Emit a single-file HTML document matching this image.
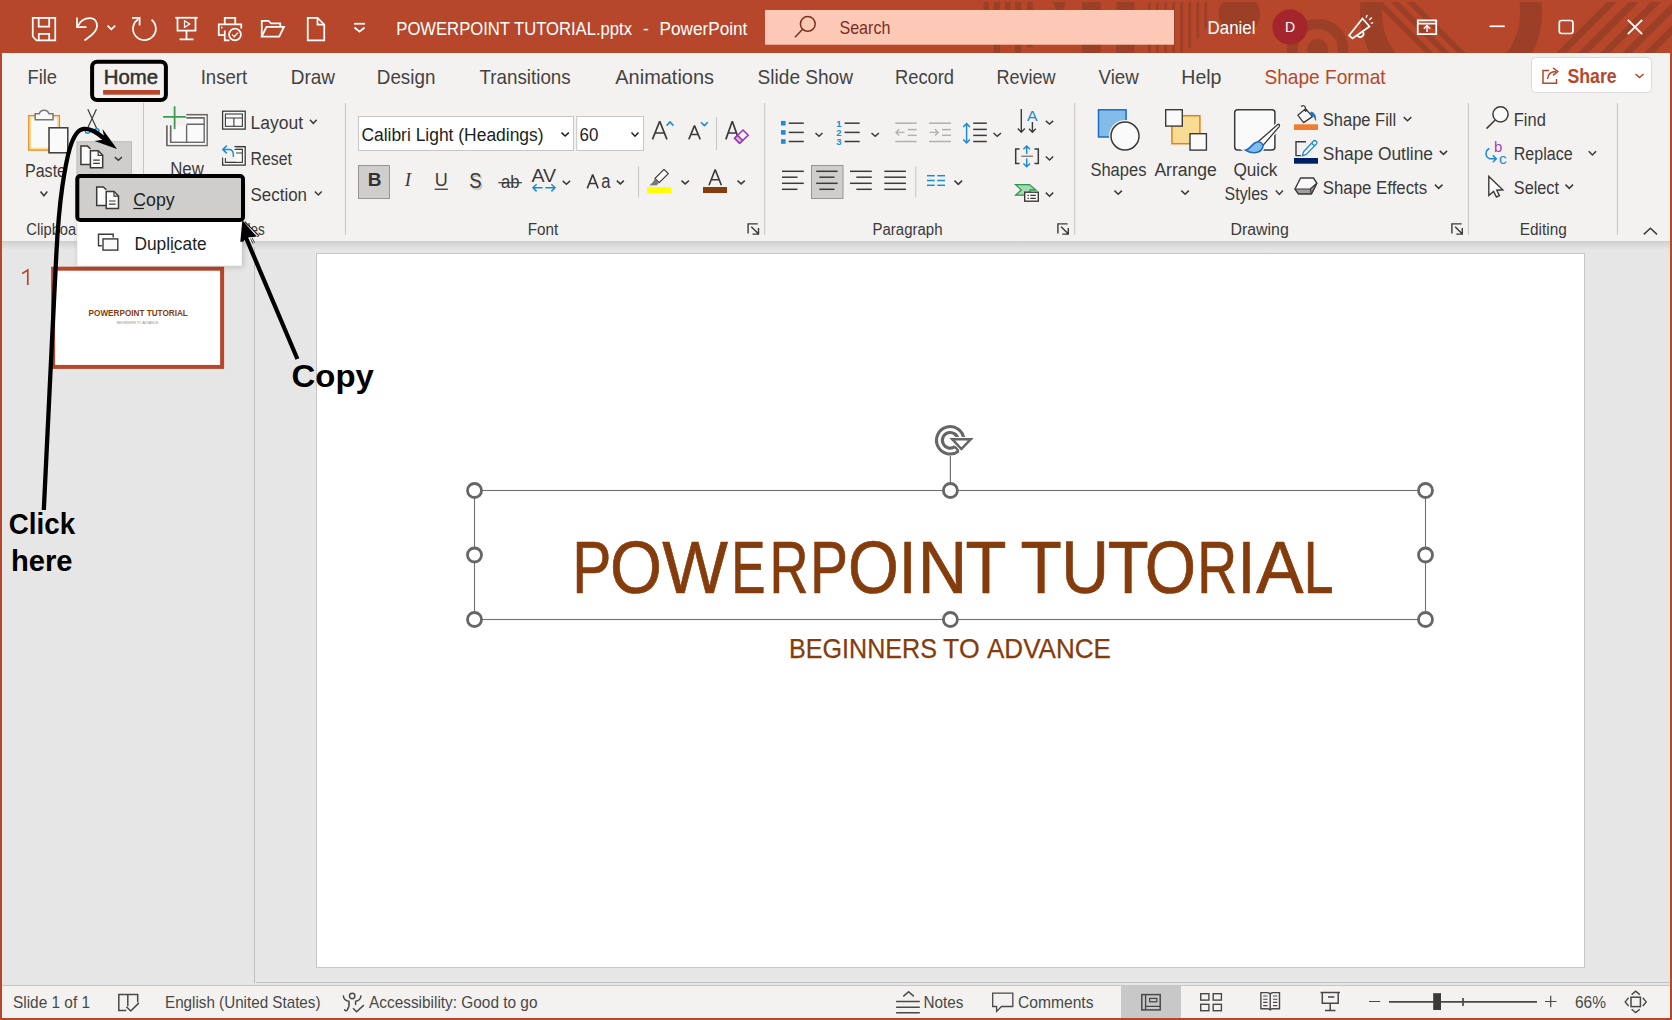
<!DOCTYPE html>
<html><head><meta charset="utf-8"><title>PowerPoint</title>
<style>
html,body{margin:0;padding:0;background:#e6e6e6;overflow:hidden}
svg{display:block;font-family:"Liberation Sans",sans-serif}
text{white-space:pre}
</style></head><body>
<svg width="1672" height="1020" viewBox="0 0 1672 1020">
<defs>
<linearGradient id="shd" x1="0" y1="0" x2="0" y2="1"><stop offset="0" stop-color="#cfcfcf"/><stop offset="1" stop-color="#e6e6e6"/></linearGradient>
<filter id="mshadow" x="-10%" y="-10%" width="125%" height="130%"><feGaussianBlur stdDeviation="3"/></filter>
<clipPath id="tbclip"><rect x="0" y="2" width="1672" height="51"/></clipPath>
</defs>
<rect x="0" y="0" width="1672" height="1020" fill="#e6e6e6" stroke="none" stroke-width="1" rx="0" />
<rect x="0" y="0" width="1672" height="53" fill="#b7472a" stroke="none" stroke-width="1" rx="0" />
<rect x="0" y="53" width="1672" height="188" fill="#f3f2f1" stroke="none" stroke-width="1" rx="0" />
<rect x="0" y="241" width="1672" height="9" fill="url(#shd)" stroke="none" stroke-width="1" rx="0" />
<rect x="0" y="985" width="1672" height="1" fill="#c6c6c6" stroke="none" stroke-width="1" rx="0" />
<rect x="0" y="986" width="1672" height="32" fill="#f3f2f1" stroke="none" stroke-width="1" rx="0" />
<g clip-path="url(#tbclip)" fill="#9c3f27" stroke="none">
<rect x="983.3" y="2" width="5.5" height="28" fill="#9c3f27" stroke="none" stroke-width="1" rx="0" />
<rect x="993.9" y="2" width="6.2000000000000455" height="51" fill="#9c3f27" stroke="none" stroke-width="1" rx="0" />
<rect x="1005.1" y="2" width="5.399999999999977" height="28" fill="#9c3f27" stroke="none" stroke-width="1" rx="0" />
<rect x="1015.2" y="2" width="5.7999999999999545" height="51" fill="#9c3f27" stroke="none" stroke-width="1" rx="0" />
<rect x="1027.2" y="2" width="5.599999999999909" height="45.4" fill="#9c3f27" stroke="none" stroke-width="1" rx="0" />
<path d="M1052.8,2 L1066,2 L1062,12 L1057,12 Z"/>
<rect x="1082" y="2" width="18.7" height="51" fill="#9c3f27" stroke="none" stroke-width="1" rx="0" />
<rect x="1116.3" y="2" width="18.2" height="51" fill="#9c3f27" stroke="none" stroke-width="1" rx="0" />
<path d="M1148.2,2 h2.6 V55.4 l-2.6,2.6 Z"/>
<path d="M1156.2,2 h2.6 V55.4 l-2.6,2.6 Z"/>
<path d="M1164.3,2 h2.6 V55.4 l-2.6,2.6 Z"/>
<path d="M1172.4,2 h2.6 V55.4 l-2.6,2.6 Z"/>
<path d="M1180.4,2 h2.6 V55.4 l-2.6,2.6 Z"/>
<path d="M1188.5,2 h2.6 V46.4 l-2.6,2.6 Z"/>
<path d="M1196.5,2 h2.6 V37.1 l-2.6,2.6 Z"/>
<path d="M1204.5,2 h2.6 V26.9 l-2.6,2.6 Z"/>
<circle cx="1239.3" cy="14" r="20.7"/>
<circle cx="1317.6" cy="49.3" r="10.5"/>
<circle cx="1317.6" cy="49.3" r="25.4" fill="none" stroke="#9c3f27" stroke-width="10.4"/>
<circle cx="1451" cy="12" r="80" fill="none" stroke="#9c3f27" stroke-width="22"/>
<path d="M1374.5,2 l8,0 l52,52 l-8,0 Z"/>
<path d="M1390.6,2 l8,0 l52,52 l-8,0 Z"/>
<path d="M1406.7,2 l8,0 l52,52 l-8,0 Z"/>
<path d="M1556,53 l10,0 l52,-52 l-10,0 Z"/>
<path d="M1578,53 l10,0 l52,-52 l-10,0 Z"/>
<path d="M1600,53 l10,0 l52,-52 l-10,0 Z"/>
<path d="M1622,53 l10,0 l52,-52 l-10,0 Z"/>
<path d="M1644,53 l10,0 l52,-52 l-10,0 Z"/>
</g>
<path d="M32.75,17.75 H55.25 V40.25 H36.5 L32.75,36.5 Z" fill="none" stroke="#ffffff" stroke-width="1.75" />
<path d="M38.7,17.75 V26.5 H49.2 V17.75" fill="none" stroke="#ffffff" stroke-width="1.75" />
<path d="M38.8,40.25 V33.8 H49.2 V40.25" fill="none" stroke="#ffffff" stroke-width="1.75" />
<path d="M37.75,40.25 V29.75 H50.5 V40.25" fill="none" stroke="#ffffff" stroke-width="0" />
<path d="M77,17.5 V27 H86.5" fill="none" stroke="#ffffff" stroke-width="1.75" />
<path d="M77.5,26.5 C80,21 85,18 90,18 C95,18 97,22 97,26 C97,30 94,33 91,35.5 L84.5,40.5" fill="none" stroke="#ffffff" stroke-width="1.75" />
<path d="M107.5,25.6 L111.35,29.4 L115.2,25.6" fill="none" stroke="#ffffff" stroke-width="1.7"/>
<path d="M132,17.9 H139.6 V25.5" fill="none" stroke="#ffffff" stroke-width="1.75" />
<path d="M151.5,19.8 A11.4,11.4 0 1 1 138.2,19.2" fill="none" stroke="#ffffff" stroke-width="1.75" />
<path d="M175.3,17.75 H197.7" fill="none" stroke="#ffffff" stroke-width="1.75" />
<path d="M177.5,17.75 V30.5 H195.5 V17.75" fill="none" stroke="#ffffff" stroke-width="1.75" />
<path d="M186.5,30.5 V39 M179.5,39.25 H193.5" fill="none" stroke="#ffffff" stroke-width="1.75" />
<path d="M184.5,20.8 L189.8,24 L184.5,27.3 Z" fill="none" stroke="#ffffff" stroke-width="1.2" />
<path d="M224.75,24 V17.75 H235.25 V24" fill="none" stroke="#ffffff" stroke-width="1.75" />
<path d="M224.5,35 H218.75 V24.25 H241.25 V28.5" fill="none" stroke="#ffffff" stroke-width="1.75" />
<path d="M224.75,30.5 V40.25 H229.5" fill="none" stroke="#ffffff" stroke-width="1.75" />
<path d="M221,27.5 h1.5" fill="none" stroke="#ffffff" stroke-width="1.75" />
<circle cx="235" cy="34.5" r="5.9" fill="none" stroke="#ffffff" stroke-width="1.75" />
<path d="M232.2,34.6 L234.3,36.7 L238,32.6" fill="none" stroke="#ffffff" stroke-width="1.3" />
<path d="M261.75,36.3 V20.75 H268.5 L271,23.25 H280.25 V26.5" fill="none" stroke="#ffffff" stroke-width="1.75" />
<path d="M261.75,36.5 L266.5,26.75 H284 L279.25,36.5 Z" fill="none" stroke="#ffffff" stroke-width="1.75" />
<path d="M307.75,17.75 H317.5 L324.25,24.5 V40.25 H307.75 Z" fill="none" stroke="#ffffff" stroke-width="1.75" />
<path d="M317.5,17.75 V24.5 H324.25" fill="none" stroke="#ffffff" stroke-width="1.75" />
<path d="M354,23.75 H365" fill="none" stroke="#ffffff" stroke-width="1.75" />
<path d="M354.5,27.5 L359.5,31.7 L364.5,27.5" fill="none" stroke="#ffffff" stroke-width="1.75" />
<text x="396.3" y="35" font-size="18.2" fill="#ffffff" textLength="235.7" lengthAdjust="spacingAndGlyphs" >POWERPOINT TUTORIAL.pptx</text>
<text x="643" y="35" font-size="18.2" fill="#ffffff" textLength="5.8" lengthAdjust="spacingAndGlyphs" >-</text>
<text x="659.6" y="35" font-size="18.2" fill="#ffffff" textLength="87.7" lengthAdjust="spacingAndGlyphs" >PowerPoint</text>
<rect x="765" y="10" width="409" height="34.7" fill="#fcc9b7" stroke="none" stroke-width="1" rx="0" />
<circle cx="807.8" cy="23.9" r="7.4" fill="none" stroke="#7b2f1f" stroke-width="1.5" />
<line x1="802.6" y1="29.3" x2="795" y2="37.2" stroke="#7b2f1f" stroke-width="1.5" />
<text x="839.4" y="33.8" font-size="18.2" fill="#7b2f1f" textLength="51" lengthAdjust="spacingAndGlyphs" >Search</text>
<text x="1207.6" y="33.8" font-size="18.2" fill="#ffffff" textLength="47.8" lengthAdjust="spacingAndGlyphs" >Daniel</text>
<circle cx="1290" cy="27" r="17.7" fill="#a4262c" stroke="none" stroke-width="0" />
<text x="1290" y="32.1" font-size="14" fill="#ffffff" text-anchor="middle" >D</text>
<path d="M1349,35.5 L1362.5,18.5 L1369.5,26.5 L1352.5,38.5 Z" fill="none" stroke="#ffffff" stroke-width="1.75" />
<path d="M1357.5,35.5 a3.2,3.2 0 0 0 5.5,-3.5" fill="none" stroke="#ffffff" stroke-width="1.75" />
<path d="M1366,17.8 l1.2,-2.8 M1369.2,20 l2.6,-2.4 M1370.8,23.3 l2.4,-0.6" fill="none" stroke="#ffffff" stroke-width="1.3" />
<path d="M1417.75,20.25 H1436.25 V34 H1417.75 Z M1417.75,23.5 H1436.25" fill="none" stroke="#ffffff" stroke-width="1.75" />
<path d="M1427,32 V26 M1423.8,28.8 L1427,25.6 L1430.2,28.8" fill="none" stroke="#ffffff" stroke-width="1.4" />
<line x1="1489.6" y1="26.3" x2="1504.7" y2="26.3" stroke="#ffffff" stroke-width="1.7" />
<rect x="1559.3" y="20.5" width="13.6" height="13" fill="none" stroke="#ffffff" stroke-width="1.7" rx="2.2" />
<path d="M1627.8,19.8 L1642.2,34.2 M1642.2,19.8 L1627.8,34.2" fill="none" stroke="#ffffff" stroke-width="1.75" />
<text x="27.5" y="83.6" font-size="19.8" fill="#454341" textLength="29.5" lengthAdjust="spacingAndGlyphs" >File</text>
<text x="200.7" y="83.6" font-size="19.8" fill="#454341" textLength="46.5" lengthAdjust="spacingAndGlyphs" >Insert</text>
<text x="290.7" y="83.6" font-size="19.8" fill="#454341" textLength="44.3" lengthAdjust="spacingAndGlyphs" >Draw</text>
<text x="376.8" y="83.6" font-size="19.8" fill="#454341" textLength="58.6" lengthAdjust="spacingAndGlyphs" >Design</text>
<text x="479.6" y="83.6" font-size="19.8" fill="#454341" textLength="91.1" lengthAdjust="spacingAndGlyphs" >Transitions</text>
<text x="615.3" y="83.6" font-size="19.8" fill="#454341" textLength="98.7" lengthAdjust="spacingAndGlyphs" >Animations</text>
<text x="757.6" y="83.6" font-size="19.8" fill="#454341" textLength="95.4" lengthAdjust="spacingAndGlyphs" >Slide Show</text>
<text x="895" y="83.6" font-size="19.8" fill="#454341" textLength="59" lengthAdjust="spacingAndGlyphs" >Record</text>
<text x="996.4" y="83.6" font-size="19.8" fill="#454341" textLength="59.2" lengthAdjust="spacingAndGlyphs" >Review</text>
<text x="1098.5" y="83.6" font-size="19.8" fill="#454341" textLength="40.3" lengthAdjust="spacingAndGlyphs" >View</text>
<text x="1181.3" y="83.6" font-size="19.8" fill="#454341" textLength="40.2" lengthAdjust="spacingAndGlyphs" >Help</text>
<text x="103.8" y="83.6" font-size="19.8" fill="#323130" textLength="54.4" lengthAdjust="spacingAndGlyphs" stroke="#323130" stroke-width="0.5">Home</text>
<rect x="103.1" y="90" width="56.9" height="4.7" fill="#b7472a" stroke="none" stroke-width="1" rx="0" />
<text x="1264.4" y="83.6" font-size="19.8" fill="#b7472a" textLength="121.2" lengthAdjust="spacingAndGlyphs" >Shape Format</text>
<rect x="1531.5" y="57.5" width="120" height="35" fill="#ffffff" stroke="#dcdad8" stroke-width="1" rx="4" />
<path d="M1549,70.5 H1543 V83.25 H1556.5 V79" fill="none" stroke="#b7472a" stroke-width="1.5" />
<path d="M1547.5,79 C1548,73.5 1551.5,71.5 1556,71.5 M1553,67.8 L1557.8,71.5 L1553,75.4" fill="none" stroke="#b7472a" stroke-width="1.5" />
<text x="1567.5" y="83.3" font-size="19.8" fill="#b7472a" textLength="49.2" lengthAdjust="spacingAndGlyphs" font-weight="bold" >Share</text>
<path d="M1635.5,74.0 L1639.5,77.60000000000001 L1643.5,74.0" fill="none" stroke="#b7472a" stroke-width="1.5"/>
<rect x="143.0" y="103" width="1" height="132" fill="#c8c6c4" stroke="none" stroke-width="1" rx="0" />
<rect x="345.0" y="103" width="1" height="132" fill="#c8c6c4" stroke="none" stroke-width="1" rx="0" />
<rect x="764.2" y="103" width="1" height="132" fill="#c8c6c4" stroke="none" stroke-width="1" rx="0" />
<rect x="1074.2" y="103" width="1" height="132" fill="#c8c6c4" stroke="none" stroke-width="1" rx="0" />
<rect x="1467.9" y="103" width="1" height="132" fill="#c8c6c4" stroke="none" stroke-width="1" rx="0" />
<rect x="1616.9" y="103" width="1" height="132" fill="#c8c6c4" stroke="none" stroke-width="1" rx="0" />
<rect x="28.9" y="115.7" width="30.4" height="34.3" fill="#fafafa" stroke="#e8861c" stroke-width="1.5" rx="0" />
<rect x="30.4" y="117.2" width="27.4" height="31.3" fill="none" stroke="#fbdc93" stroke-width="1.5" rx="0" />
<path d="M35.2,119.7 V113.7 H39.2 A5.2,5.2 0 0 1 49,113.7 H53 V119.7 Z" fill="#fafafa" stroke="#797775" stroke-width="1.5" />
<rect x="49" y="127.8" width="18.8" height="25" fill="#fafafa" stroke="#3b3a39" stroke-width="1.5" rx="0" />
<text x="25" y="176.8" font-size="18" fill="#3b3a39" textLength="41" lengthAdjust="spacingAndGlyphs" >Paste</text>
<path d="M40.5,191.5 L43.9,195.8 L47.3,191.5" fill="none" stroke="#3b3a39" stroke-width="1.5"/>
<path d="M87.8,109.3 L96.6,128.3 M96.4,109.3 L87.6,128.3" fill="none" stroke="#3b3a39" stroke-width="1.2" />
<circle cx="87.6" cy="131" r="2.3" fill="none" stroke="#1e8ad2" stroke-width="1.4" />
<circle cx="96.7" cy="131" r="2.3" fill="none" stroke="#1e8ad2" stroke-width="1.4" />
<rect x="76.9" y="141.7" width="54.6" height="34" fill="#d0cecc" stroke="#bdbbb9" stroke-width="1" rx="0" />
<path d="M90.2,164.6 H80.9 V146.1 H87.5 L90.5,149" fill="#fafafa" stroke="#3b3a39" stroke-width="1.5" />
<path d="M90.4,150.7 H98.3 L102.7,155.2 V167.7 H90.4 Z" fill="#fafafa" stroke="#3b3a39" stroke-width="1.5" />
<path d="M98.2,151 V155.4 H102.5" fill="none" stroke="#3b3a39" stroke-width="1.2" />
<path d="M93.2,160.2 H99.8 M93.2,163.4 H99.8" fill="none" stroke="#3b3a39" stroke-width="1.2" />
<path d="M114.8,157.1 L118.35,160.3 L121.9,157.1" fill="none" stroke="#3b3a39" stroke-width="1.5"/>
<text x="26.3" y="234.8" font-size="15.6" fill="#3b3a39" textLength="63" lengthAdjust="spacingAndGlyphs" >Clipboard</text>
<rect x="166.8" y="114.6" width="40.4" height="31" fill="#fafafa" stroke="#6b6967" stroke-width="1.4" rx="0" />
<rect x="170.6" y="117.8" width="33.6" height="24.5" fill="none" stroke="#6b6967" stroke-width="1.4" rx="0" />
<path d="M170.6,124.2 H204.2 M186.6,124.2 V142.3" fill="none" stroke="#6b6967" stroke-width="1.4" />
<rect x="162" y="105" width="24.5" height="20.5" fill="#f3f2f1" stroke="none" stroke-width="1" rx="0" />
<path d="M166.8,125.5 V145.6 M170.6,125.5 V142.3" fill="none" stroke="#6b6967" stroke-width="1.4" />
<path d="M174.6,106.2 V129 M163.1,116.9 H185.9" fill="none" stroke="#3d9c54" stroke-width="1.8" />
<path d="M186.5,114.6 H207.2 M186.5,117.8 H204.2" fill="none" stroke="#6b6967" stroke-width="1.4" />
<text x="170.2" y="175.2" font-size="18" fill="#3b3a39" textLength="33.7" lengthAdjust="spacingAndGlyphs" >New</text>
<rect x="222.6" y="111.2" width="22.6" height="17.9" fill="#fafafa" stroke="#3b3a39" stroke-width="1.3" rx="0" />
<rect x="225.4" y="114" width="17" height="12.3" fill="none" stroke="#3b3a39" stroke-width="1.1" rx="0" />
<path d="M225.4,118 H242.4 M233.9,118 V126.3" fill="none" stroke="#3b3a39" stroke-width="1.1" />
<text x="250.6" y="128.6" font-size="18" fill="#3b3a39" textLength="52.5" lengthAdjust="spacingAndGlyphs" >Layout</text>
<path d="M309.9,119.8 L313.29999999999995,123.30000000000001 L316.7,119.8" fill="none" stroke="#3b3a39" stroke-width="1.5"/>
<rect x="222.6" y="146.6" width="22.6" height="18.5" fill="#fafafa" stroke="#3b3a39" stroke-width="1.3" rx="0" />
<rect x="225.4" y="149.4" width="17" height="13" fill="none" stroke="#3b3a39" stroke-width="1.1" rx="0" />
<rect x="220" y="143" width="14.5" height="19.5" fill="#f3f2f1" stroke="none" stroke-width="1" rx="0" />
<path d="M222.6,157.5 V165.1 M225.4,158 V162.4 H236 M236,146.6 H245 M236,149.4 H242.4 M236,153 H242.4" fill="none" stroke="#3b3a39" stroke-width="1.1" />
<path d="M223.2,149.5 H229.5 C232.5,149.5 233.8,152.5 233.3,156.8 M226.8,145.6 L222.8,149.5 L226.8,153.4" fill="none" stroke="#1e8ad2" stroke-width="1.5" />
<text x="250.6" y="164.5" font-size="18" fill="#3b3a39" textLength="41.2" lengthAdjust="spacingAndGlyphs" >Reset</text>
<text x="250.6" y="200.9" font-size="18" fill="#3b3a39" textLength="56.4" lengthAdjust="spacingAndGlyphs" >Section</text>
<path d="M314.9,191.5 L318.29999999999995,195.0 L321.7,191.5" fill="none" stroke="#3b3a39" stroke-width="1.5"/>
<text x="228" y="234.8" font-size="15.6" fill="#3b3a39" textLength="36.7" lengthAdjust="spacingAndGlyphs" >Slides</text>
<rect x="358.5" y="116.5" width="215" height="34" fill="#ffffff" stroke="#c8c6c4" stroke-width="1" rx="0" />
<text x="361.4" y="140.7" font-size="18" fill="#201f1e" textLength="182.2" lengthAdjust="spacingAndGlyphs" >Calibri Light (Headings)</text>
<path d="M561.5,132.6 L565.15,136.0 L568.8,132.6" fill="none" stroke="#201f1e" stroke-width="1.5"/>
<rect x="576.7" y="116.5" width="66.8" height="34" fill="#ffffff" stroke="#c8c6c4" stroke-width="1" rx="0" />
<text x="579.6" y="140.5" font-size="18" fill="#201f1e" textLength="18.8" lengthAdjust="spacingAndGlyphs" >60</text>
<path d="M631.5,132.6 L635.0,136.20000000000002 L638.5,132.6" fill="none" stroke="#201f1e" stroke-width="1.5"/>
<path d="M652.45,139.4 L659.70,121.20 L666.95,139.4 M654.92,133.01 H664.49" fill="none" stroke="#3b3a39" stroke-width="1.7" stroke-linejoin="bevel"/>
<path d="M666.6,125.6 L670,122 L673.4,125.6" fill="none" stroke="#1e8ad2" stroke-width="1.6" />
<path d="M688.80,139.4 L694.50,125.60 L700.20,139.4 M690.74,134.50 H698.26" fill="none" stroke="#3b3a39" stroke-width="1.6" stroke-linejoin="bevel"/>
<path d="M701,122.2 L704.4,125.6 L707.8,122.2" fill="none" stroke="#1e8ad2" stroke-width="1.6" />
<rect x="716" y="117" width="1" height="33" fill="#c8c6c4" stroke="none" stroke-width="1" rx="0" />
<path d="M725.85,139.4 L732.30,121.20 L738.75,139.4 M728.04,133.01 H736.56" fill="none" stroke="#3b3a39" stroke-width="1.7" stroke-linejoin="bevel"/>
<path d="M743,130 L748.2,135.3 L739.6,143.3 L734.6,138.2 Z" fill="#f3f2f1" stroke="#9b34b0" stroke-width="1.5" />
<path d="M737.6,135.4 L742.7,140.5 L739.6,143.3 L734.6,138.2 Z" fill="#dcb4e4" stroke="#9b34b0" stroke-width="1.5" />
<rect x="358.5" y="165.5" width="31" height="33" fill="#d0cecc" stroke="#979593" stroke-width="1" rx="0" />
<text x="374.5" y="186.2" font-size="19" fill="#323130" font-weight="bold" text-anchor="middle" >B</text>
<text x="408" y="186.2" font-size="19" fill="#3b3a39" text-anchor="middle" font-style="italic" font-family="Liberation Serif" >I</text>
<text x="441.3" y="185.6" font-size="18" fill="#3b3a39" text-anchor="middle" >U</text>
<rect x="434.7" y="188.6" width="13.2" height="1.3" fill="#3b3a39" stroke="none" stroke-width="1" rx="0" />
<text x="476.9" y="189.6" font-size="22.5" fill="#c8c6c4" textLength="12.4" lengthAdjust="spacingAndGlyphs" text-anchor="middle" >S</text>
<text x="475.5" y="188.4" font-size="22.5" fill="#3b3a39" textLength="12.4" lengthAdjust="spacingAndGlyphs" text-anchor="middle" >S</text>
<text x="501" y="187.6" font-size="18" fill="#3b3a39" textLength="18.5" lengthAdjust="spacingAndGlyphs" >ab</text>
<rect x="498.3" y="182.1" width="23.6" height="1.2" fill="#3b3a39" stroke="none" stroke-width="1" rx="0" />
<text x="531.5" y="182" font-size="18.5" fill="#3b3a39" textLength="24.6" lengthAdjust="spacingAndGlyphs" >AV</text>
<path d="M533,187.8 H542.6 M545.4,187.8 H555 M536.6,184.2 L533,187.8 L536.6,191.4 M551.4,184.2 L555,187.8 L551.4,191.4" fill="none" stroke="#1e8ad2" stroke-width="1.5" />
<path d="M562.7,180.9 L566.4000000000001,184.3 L570.1,180.9" fill="none" stroke="#3b3a39" stroke-width="1.5"/>
<path d="M587.30,188.4 L592.70,174.60 L598.10,188.4 M589.14,183.50 H596.26" fill="none" stroke="#3b3a39" stroke-width="1.6" stroke-linejoin="bevel"/>
<text x="601.3" y="188.4" font-size="20" fill="#3b3a39" textLength="9.2" lengthAdjust="spacingAndGlyphs" >a</text>
<path d="M616.8,180.6 L620.3499999999999,183.9 L623.9,180.6" fill="none" stroke="#3b3a39" stroke-width="1.5"/>
<rect x="638" y="166.5" width="1" height="31" fill="#c8c6c4" stroke="none" stroke-width="1" rx="0" />
<path d="M664,169.4 L668.3,173.6 L659.2,182.6 L655,178.4 Z" fill="#fafafa" stroke="#3b3a39" stroke-width="1.3" stroke-linejoin="round"/>
<path d="M655,178.4 L659.2,182.6 L656.8,185.2 L649.5,185.6 L653.2,181.8 Z" fill="#797775" stroke="none" stroke-width="0" />
<rect x="647" y="187" width="24.2" height="6" fill="#ffff00" stroke="none" stroke-width="1" rx="0" />
<path d="M681.5,180.6 L685.2,183.9 L688.9,180.6" fill="none" stroke="#3b3a39" stroke-width="1.5"/>
<path d="M709.00,185.3 L715.20,169.60 L721.40,185.3 M711.11,179.76 H719.29" fill="none" stroke="#3b3a39" stroke-width="1.6" stroke-linejoin="bevel"/>
<rect x="703" y="187" width="24" height="6" fill="#843c0c" stroke="none" stroke-width="1" rx="0" />
<path d="M737.5,180.6 L741.15,183.9 L744.8,180.6" fill="none" stroke="#3b3a39" stroke-width="1.5"/>
<path d="M748.1,233.6 V223.89999999999998 H757.8" fill="none" stroke="#3b3a39" stroke-width="1.4" />
<path d="M751.3,226.7 L758.4,233.79999999999998 M758.5,228.0 V234.1 H752.5" fill="none" stroke="#3b3a39" stroke-width="1.4" />
<text x="527.8" y="234.8" font-size="15.6" fill="#3b3a39" textLength="30.5" lengthAdjust="spacingAndGlyphs" >Font</text>
<rect x="781" y="120.9" width="4.6" height="4.6" fill="#1e8ad2" stroke="none" stroke-width="1" rx="0" />
<line x1="788.7" y1="123.2" x2="803.8" y2="123.2" stroke="#3b3a39" stroke-width="1.5" />
<rect x="781" y="130.1" width="4.6" height="4.6" fill="#1e8ad2" stroke="none" stroke-width="1" rx="0" />
<line x1="788.7" y1="132.4" x2="803.8" y2="132.4" stroke="#3b3a39" stroke-width="1.5" />
<rect x="781" y="139.2" width="4.6" height="4.6" fill="#1e8ad2" stroke="none" stroke-width="1" rx="0" />
<line x1="788.7" y1="141.5" x2="803.8" y2="141.5" stroke="#3b3a39" stroke-width="1.5" />
<path d="M815.5,133.0 L819.0,136.20000000000002 L822.5,133.0" fill="none" stroke="#3b3a39" stroke-width="1.5"/>
<text x="839" y="126.7" font-size="9.5" fill="#1e8ad2" font-weight="bold" text-anchor="middle" >1</text>
<line x1="844.6" y1="123.2" x2="859.7" y2="123.2" stroke="#3b3a39" stroke-width="1.5" />
<text x="839" y="135.9" font-size="9.5" fill="#1e8ad2" font-weight="bold" text-anchor="middle" >2</text>
<line x1="844.6" y1="132.4" x2="859.7" y2="132.4" stroke="#3b3a39" stroke-width="1.5" />
<text x="839" y="145.0" font-size="9.5" fill="#1e8ad2" font-weight="bold" text-anchor="middle" >3</text>
<line x1="844.6" y1="141.5" x2="859.7" y2="141.5" stroke="#3b3a39" stroke-width="1.5" />
<path d="M871.5,133.0 L875.2,136.20000000000002 L878.9,133.0" fill="none" stroke="#3b3a39" stroke-width="1.5"/>
<line x1="895.3" y1="123.2" x2="916.6" y2="123.2" stroke="#b3b0ad" stroke-width="1.5" />
<line x1="895.3" y1="141.5" x2="916.6" y2="141.5" stroke="#b3b0ad" stroke-width="1.5" />
<line x1="907.8" y1="129.6" x2="916.6" y2="129.6" stroke="#b3b0ad" stroke-width="1.5" />
<line x1="907.8" y1="135.3" x2="916.6" y2="135.3" stroke="#b3b0ad" stroke-width="1.5" />
<path d="M896,132.4 H904.5 M899.2,129.2 L896,132.4 L899.2,135.6" fill="none" stroke="#b3b0ad" stroke-width="1.4" />
<line x1="929" y1="123.2" x2="950.9" y2="123.2" stroke="#b3b0ad" stroke-width="1.5" />
<line x1="929" y1="141.5" x2="950.9" y2="141.5" stroke="#b3b0ad" stroke-width="1.5" />
<line x1="942" y1="129.6" x2="950.9" y2="129.6" stroke="#b3b0ad" stroke-width="1.5" />
<line x1="942" y1="135.3" x2="950.9" y2="135.3" stroke="#b3b0ad" stroke-width="1.5" />
<path d="M929.6,132.4 H938.2 M935,129.2 L938.2,132.4 L935,135.6" fill="none" stroke="#b3b0ad" stroke-width="1.4" />
<path d="M966.6,123.5 V142.8 M963.3,127 L966.6,123.5 L969.9,127 M963.3,139.4 L966.6,142.9 L969.9,139.4" fill="none" stroke="#1e8ad2" stroke-width="1.5" />
<line x1="973.2" y1="123.2" x2="986.8" y2="123.2" stroke="#3b3a39" stroke-width="1.5" />
<line x1="973.2" y1="129.4" x2="986.8" y2="129.4" stroke="#3b3a39" stroke-width="1.5" />
<line x1="973.2" y1="135.4" x2="986.8" y2="135.4" stroke="#3b3a39" stroke-width="1.5" />
<line x1="973.2" y1="141.5" x2="986.8" y2="141.5" stroke="#3b3a39" stroke-width="1.5" />
<path d="M993.5,133.0 L997.25,136.20000000000002 L1001.0,133.0" fill="none" stroke="#3b3a39" stroke-width="1.5"/>
<path d="M1021.3,109 V132.2 M1017.8,128.6 L1021.3,132.2 L1024.8,128.6" fill="none" stroke="#3b3a39" stroke-width="1.4" />
<text x="1032.4" y="120.6" font-size="15.5" fill="#1e8ad2" textLength="10.6" lengthAdjust="spacingAndGlyphs" text-anchor="middle" >A</text>
<path d="M1032.4,122 V132.2 M1029,128.8 L1032.4,132.2 L1035.8,128.8" fill="none" stroke="#3b3a39" stroke-width="1.4" />
<path d="M1045.8,120.89999999999999 L1049.5,124.10000000000001 L1053.2,120.89999999999999" fill="none" stroke="#3b3a39" stroke-width="1.5"/>
<path d="M1019.5,148.9 H1015.7 V163.6 H1019.5 M1034.5,148.9 H1038.3 V163.6 H1034.5" fill="none" stroke="#3b3a39" stroke-width="1.5" />
<line x1="1021.3" y1="156.2" x2="1033" y2="156.2" stroke="#797775" stroke-width="1.3" />
<path d="M1026.7,146 V154 M1023.4,149.3 L1026.7,146 L1030,149.3 M1026.7,158.4 V166.8 M1023.4,163.5 L1026.7,166.8 L1030,163.5" fill="none" stroke="#1e8ad2" stroke-width="1.5" />
<path d="M1045.8,156.5 L1049.5,160.0 L1053.2,156.5" fill="none" stroke="#3b3a39" stroke-width="1.5"/>
<path d="M1015.6,184.6 H1029.5 L1036,190 H1030 V195.2 H1015.6 L1021.2,189.9 Z" fill="#a6d9b1" stroke="#2e9648" stroke-width="1.3" />
<rect x="1024.7" y="192.2" width="13.6" height="9" fill="#fafafa" stroke="#3b3a39" stroke-width="1.4" rx="0" />
<path d="M1027.5,195.3 h1.4 M1030.3,195.3 H1035.8 M1027.5,198.3 h1.4 M1030.3,198.3 H1035.8" fill="none" stroke="#3b3a39" stroke-width="1.2" />
<path d="M1045.8,192.6 L1049.5,196.20000000000002 L1053.2,192.6" fill="none" stroke="#3b3a39" stroke-width="1.5"/>
<line x1="782" y1="171.3" x2="803.8" y2="171.3" stroke="#3b3a39" stroke-width="1.5" />
<line x1="782" y1="177.2" x2="797.478" y2="177.2" stroke="#3b3a39" stroke-width="1.5" />
<line x1="782" y1="183.3" x2="803.8" y2="183.3" stroke="#3b3a39" stroke-width="1.5" />
<line x1="782" y1="189.3" x2="797.478" y2="189.3" stroke="#3b3a39" stroke-width="1.5" />
<rect x="811.5" y="165.5" width="31.5" height="33" fill="#d0cecc" stroke="#979593" stroke-width="1" rx="0" />
<line x1="816.2" y1="171.3" x2="837.6" y2="171.3" stroke="#3b3a39" stroke-width="1.5" />
<line x1="819.303" y1="177.2" x2="834.4970000000001" y2="177.2" stroke="#3b3a39" stroke-width="1.5" />
<line x1="816.2" y1="183.3" x2="837.6" y2="183.3" stroke="#3b3a39" stroke-width="1.5" />
<line x1="819.303" y1="189.3" x2="834.4970000000001" y2="189.3" stroke="#3b3a39" stroke-width="1.5" />
<line x1="850" y1="171.3" x2="871.8" y2="171.3" stroke="#3b3a39" stroke-width="1.5" />
<line x1="856.322" y1="177.2" x2="871.8" y2="177.2" stroke="#3b3a39" stroke-width="1.5" />
<line x1="850" y1="183.3" x2="871.8" y2="183.3" stroke="#3b3a39" stroke-width="1.5" />
<line x1="856.322" y1="189.3" x2="871.8" y2="189.3" stroke="#3b3a39" stroke-width="1.5" />
<line x1="884.3" y1="171.3" x2="905.9" y2="171.3" stroke="#3b3a39" stroke-width="1.5" />
<line x1="884.3" y1="177.2" x2="905.9" y2="177.2" stroke="#3b3a39" stroke-width="1.5" />
<line x1="884.3" y1="183.3" x2="905.9" y2="183.3" stroke="#3b3a39" stroke-width="1.5" />
<line x1="884.3" y1="189.3" x2="905.9" y2="189.3" stroke="#3b3a39" stroke-width="1.5" />
<rect x="915.2" y="166.5" width="1" height="31" fill="#c8c6c4" stroke="none" stroke-width="1" rx="0" />
<line x1="927" y1="175.7" x2="934.7" y2="175.7" stroke="#1e8ad2" stroke-width="1.5" />
<line x1="937.3" y1="175.7" x2="945" y2="175.7" stroke="#1e8ad2" stroke-width="1.5" />
<line x1="927" y1="180.5" x2="934.7" y2="180.5" stroke="#1e8ad2" stroke-width="1.5" />
<line x1="937.3" y1="180.5" x2="945" y2="180.5" stroke="#1e8ad2" stroke-width="1.5" />
<line x1="927" y1="185.3" x2="934.7" y2="185.3" stroke="#1e8ad2" stroke-width="1.5" />
<line x1="937.3" y1="185.3" x2="945" y2="185.3" stroke="#1e8ad2" stroke-width="1.5" />
<path d="M954.5,180.6 L958.3,184.4 L962.1,180.6" fill="none" stroke="#3b3a39" stroke-width="1.5"/>
<path d="M1057.9,233.6 V223.89999999999998 H1067.6000000000001" fill="none" stroke="#3b3a39" stroke-width="1.4" />
<path d="M1061.1000000000001,226.7 L1068.2,233.79999999999998 M1068.3,228.0 V234.1 H1062.3" fill="none" stroke="#3b3a39" stroke-width="1.4" />
<text x="872.5" y="234.8" font-size="15.6" fill="#3b3a39" textLength="70" lengthAdjust="spacingAndGlyphs" >Paragraph</text>
<rect x="1098.5" y="109.8" width="27.6" height="27.2" fill="#83bbeb" stroke="#1b6ec2" stroke-width="1.5" rx="0" />
<circle cx="1125" cy="136" r="16" fill="#f3f2f1" stroke="none" stroke-width="0" />
<circle cx="1125" cy="136" r="14" fill="#fafafa" stroke="#3b3a39" stroke-width="1.5" />
<text x="1090.4" y="175.7" font-size="18" fill="#3b3a39" textLength="56" lengthAdjust="spacingAndGlyphs" >Shapes</text>
<path d="M1114.5,190.6 L1118.2,194.3 L1121.9,190.6" fill="none" stroke="#3b3a39" stroke-width="1.5"/>
<rect x="1171.9" y="115.7" width="28" height="28" fill="#f9dc94" stroke="#e08214" stroke-width="1.5" rx="0" />
<rect x="1165.7" y="109.7" width="16.6" height="16.4" fill="#fafafa" stroke="#3b3a39" stroke-width="1.4" rx="0" />
<rect x="1190" y="133.7" width="16.4" height="16.4" fill="#fafafa" stroke="#3b3a39" stroke-width="1.4" rx="0" />
<text x="1154.4" y="175.7" font-size="18" fill="#3b3a39" textLength="62.4" lengthAdjust="spacingAndGlyphs" >Arrange</text>
<path d="M1181.4,190.6 L1185.1,194.3 L1188.8,190.6" fill="none" stroke="#3b3a39" stroke-width="1.5"/>
<rect x="1234.7" y="109.7" width="40.2" height="40.3" fill="#fafafa" stroke="#3b3a39" stroke-width="1.5" rx="3" />
<path d="M1277.6,124.6 C1279.2,123.6 1280.2,125 1279,126.8 L1263,145.4 L1257.8,142 Z" fill="#fafafa" stroke="#fafafa" stroke-width="4" />
<path d="M1257.6,141.8 C1261,141.6 1263.4,144 1262.8,147 C1261.6,152.6 1252.5,155 1245.4,150.2 C1250.8,149.6 1251.2,143.2 1257.6,141.8 Z" fill="#fafafa" stroke="#fafafa" stroke-width="4" />
<path d="M1277.6,124.6 C1279.2,123.6 1280.2,125 1279,126.8 L1263,145.4 L1257.8,142 Z" fill="#fafafa" stroke="#3b3a39" stroke-width="1.3" />
<path d="M1257.6,141.8 C1261,141.6 1263.4,144 1262.8,147 C1261.6,152.6 1252.5,155 1245.4,150.2 C1250.8,149.6 1251.2,143.2 1257.6,141.8 Z" fill="#83bbeb" stroke="#1b6ec2" stroke-width="1.6" />
<text x="1233.4" y="175.7" font-size="18" fill="#3b3a39" textLength="44" lengthAdjust="spacingAndGlyphs" >Quick</text>
<text x="1224.6" y="200" font-size="18" fill="#3b3a39" textLength="43.4" lengthAdjust="spacingAndGlyphs" >Styles</text>
<path d="M1275.8,190.6 L1279.35,194.4 L1282.9,190.6" fill="none" stroke="#3b3a39" stroke-width="1.5"/>
<path d="M1301,106.5 C1303.5,104.8 1305.5,106 1305.6,109 V112 M1297.8,115.2 L1305.6,108.8 L1312.4,116.6 L1303.6,122.6 Z" fill="#fafafa" stroke="#3b3a39" stroke-width="1.3" stroke-linejoin="round"/>
<path d="M1311,112 C1314.5,112.5 1316,116 1315.6,120.4 C1314.6,117 1313.4,115.2 1310.5,114.4 Z" fill="#1b6ec2" stroke="#1b6ec2" stroke-width="0.8" />
<rect x="1294" y="124.3" width="24" height="5.7" fill="#ed7d31" stroke="none" stroke-width="1" rx="0" />
<text x="1322.8" y="126.2" font-size="18" fill="#3b3a39" textLength="73.4" lengthAdjust="spacingAndGlyphs" >Shape Fill</text>
<path d="M1403.7,117.1 L1407.5,120.7 L1411.3,117.1" fill="none" stroke="#3b3a39" stroke-width="1.5"/>
<path d="M1306,141.8 H1296 V155.6 H1301" fill="none" stroke="#3b3a39" stroke-width="1.4" />
<path d="M1313.6,141 C1315,139.6 1318,142.3 1316.6,143.8 L1306.2,154.4 L1302.4,155.8 L1303.6,151.8 Z M1311.6,143 L1314.6,146" fill="#fafafa" stroke="#1e8ad2" stroke-width="1.3" stroke-linejoin="round"/>
<rect x="1294" y="158" width="24" height="5.7" fill="#002060" stroke="none" stroke-width="1" rx="0" />
<text x="1322.8" y="159.6" font-size="18" fill="#3b3a39" textLength="110.2" lengthAdjust="spacingAndGlyphs" >Shape Outline</text>
<path d="M1439.8,150.9 L1443.4499999999998,154.4 L1447.1,150.9" fill="none" stroke="#3b3a39" stroke-width="1.5"/>
<path d="M1300.5,178 H1313.5 L1316.8,183.2 L1311.5,193.8 H1298.5 L1295,189 Z" fill="#fafafa" stroke="#3b3a39" stroke-width="1.4" stroke-linejoin="round"/>
<path d="M1295,189 L1298.5,193.8 H1311.5 L1316.8,183.2 L1310.2,189 Z" fill="#a19f9d" stroke="#3b3a39" stroke-width="1.2" stroke-linejoin="round"/>
<path d="M1310.2,189 L1311.5,193.8" fill="none" stroke="#3b3a39" stroke-width="1.2" />
<text x="1322.8" y="193.9" font-size="18" fill="#3b3a39" textLength="104.4" lengthAdjust="spacingAndGlyphs" >Shape Effects</text>
<path d="M1434.9,184.6 L1438.7,188.4 L1442.5,184.6" fill="none" stroke="#3b3a39" stroke-width="1.5"/>
<path d="M1451.9,233.6 V223.89999999999998 H1461.6000000000001" fill="none" stroke="#3b3a39" stroke-width="1.4" />
<path d="M1455.1000000000001,226.7 L1462.2,233.79999999999998 M1462.3,228.0 V234.1 H1456.3" fill="none" stroke="#3b3a39" stroke-width="1.4" />
<text x="1230.4" y="234.8" font-size="15.6" fill="#3b3a39" textLength="58.4" lengthAdjust="spacingAndGlyphs" >Drawing</text>
<circle cx="1500.5" cy="114.3" r="7.6" fill="#fafafa" stroke="#3b3a39" stroke-width="1.5" />
<line x1="1495.2" y1="120" x2="1486.5" y2="128.6" stroke="#3b3a39" stroke-width="1.5" />
<text x="1513.8" y="126.2" font-size="18" fill="#3b3a39" textLength="32" lengthAdjust="spacingAndGlyphs" >Find</text>
<text x="1494" y="151.7" font-size="15" fill="#a93bb5" >b</text>
<text x="1499" y="163.8" font-size="15.5" fill="#1e8ad2" >c</text>
<path d="M1489.5,148.5 C1485,150.5 1484.6,157 1490,158.8 H1496 M1492.8,155.4 L1496.3,158.8 L1492.8,162.3" fill="none" stroke="#1e8ad2" stroke-width="1.5" />
<text x="1513.8" y="159.6" font-size="18" fill="#3b3a39" textLength="58.8" lengthAdjust="spacingAndGlyphs" >Replace</text>
<path d="M1588.7,151.29999999999998 L1592.4,155.0 L1596.1,151.29999999999998" fill="none" stroke="#3b3a39" stroke-width="1.5"/>
<path d="M1488.8,176.5 V195.5 L1493.6,191.4 L1496.4,197 L1499.4,195.6 L1496.8,190.2 L1502.8,189.8 Z" fill="#fafafa" stroke="#3b3a39" stroke-width="1.4" stroke-linejoin="miter"/>
<text x="1513.8" y="193.9" font-size="18" fill="#3b3a39" textLength="45.2" lengthAdjust="spacingAndGlyphs" >Select</text>
<path d="M1565.5,184.6 L1569.25,188.4 L1573.0,184.6" fill="none" stroke="#3b3a39" stroke-width="1.5"/>
<text x="1519.8" y="234.8" font-size="15.6" fill="#3b3a39" textLength="47" lengthAdjust="spacingAndGlyphs" >Editing</text>
<path d="M1643.8,234.4 L1650.4,228.2 L1657,234.4" fill="none" stroke="#3b3a39" stroke-width="1.5" />
<rect x="254" y="247" width="1" height="736" fill="#c0c0c0" stroke="none" stroke-width="1" rx="0" />
<rect x="256" y="982" width="1414" height="1" fill="#c3c3c3" stroke="none" stroke-width="1" rx="0" />
<path d="M22.2,273.4 L27.8,270 V285" fill="none" stroke="#b7472a" stroke-width="1.7" stroke-linejoin="miter"/>
<rect x="53.1" y="268.7" width="169" height="98.2" fill="#ffffff" stroke="#b7472a" stroke-width="4" rx="0" />
<text x="88.6" y="316.1" font-size="8.8" fill="#843c0c" textLength="99.2" lengthAdjust="spacingAndGlyphs" font-weight="bold" >POWERPOINT TUTORIAL</text>
<text x="116.7" y="324.1" font-size="4" fill="#a08884" textLength="41.5" lengthAdjust="spacingAndGlyphs" >BEGINNERS TO ADVANCE</text>
<rect x="316.5" y="253.5" width="1268" height="714" fill="#ffffff" stroke="#c6c6c6" stroke-width="1" rx="0" />
<g fill="#843c0c" stroke="#843c0c" stroke-width="0.7" font-size="74.3">
<text transform="translate(572.24,592.7) scale(0.7890,1)">P</text>
<text transform="translate(609.99,592.7) scale(0.8991,1)">O</text>
<text transform="translate(662.24,592.7) scale(0.9361,1)">W</text>
<text transform="translate(731.14,592.7) scale(0.6903,1)">E</text>
<text transform="translate(769.42,592.7) scale(0.7276,1)">R</text>
<text transform="translate(809.88,592.7) scale(0.7662,1)">P</text>
<text transform="translate(847.96,592.7) scale(0.8794,1)">O</text>
<text transform="translate(898.71,592.7) scale(0.8659,1)">I</text>
<text transform="translate(917.83,592.7) scale(0.9228,1)">N</text>
<text transform="translate(965.44,592.7) scale(0.9021,1)">T</text>
<text transform="translate(1020.53,592.7) scale(0.9093,1)">T</text>
<text transform="translate(1061.26,592.7) scale(0.8888,1)">U</text>
<text transform="translate(1107.75,592.7) scale(0.8998,1)">T</text>
<text transform="translate(1144.63,592.7) scale(0.8873,1)">O</text>
<text transform="translate(1197.32,592.7) scale(0.7435,1)">R</text>
<text transform="translate(1237.51,592.7) scale(0.8659,1)">I</text>
<text transform="translate(1256.21,592.7) scale(0.9540,1)">A</text>
<text transform="translate(1303.86,592.7) scale(0.7204,1)">L</text>
</g>
<text x="789" y="658.2" font-size="27.5" fill="#843c0c" textLength="147.9" lengthAdjust="spacingAndGlyphs" stroke="#843c0c" stroke-width="0.25">BEGINNERS</text>
<text x="943.1" y="658.2" font-size="27.5" fill="#843c0c" textLength="36.5" lengthAdjust="spacingAndGlyphs" stroke="#843c0c" stroke-width="0.25">TO</text>
<text x="987" y="658.2" font-size="27.5" fill="#843c0c" textLength="124" lengthAdjust="spacingAndGlyphs" stroke="#843c0c" stroke-width="0.25">ADVANCE</text>
<rect x="474.5" y="490.5" width="951" height="129" fill="none" stroke="#707070" stroke-width="1.1" rx="0" />
<line x1="950.4" y1="455" x2="950.4" y2="483" stroke="#707070" stroke-width="1.2" />
<circle cx="474.5" cy="490.5" r="7" fill="#ffffff" stroke="#666666" stroke-width="2.8" />
<circle cx="950.4" cy="490.5" r="7" fill="#ffffff" stroke="#666666" stroke-width="2.8" />
<circle cx="1425.5" cy="490.5" r="7" fill="#ffffff" stroke="#666666" stroke-width="2.8" />
<circle cx="474.5" cy="555" r="7" fill="#ffffff" stroke="#666666" stroke-width="2.8" />
<circle cx="1425.5" cy="555" r="7" fill="#ffffff" stroke="#666666" stroke-width="2.8" />
<circle cx="474.5" cy="619.5" r="7" fill="#ffffff" stroke="#666666" stroke-width="2.8" />
<circle cx="950.4" cy="619.5" r="7" fill="#ffffff" stroke="#666666" stroke-width="2.8" />
<circle cx="1425.5" cy="619.5" r="7" fill="#ffffff" stroke="#666666" stroke-width="2.8" />
<circle cx="950.2" cy="440.3" r="15.6" fill="#ffffff" stroke="none" stroke-width="0" />
<path d="M963.88,439.58 A13.7,13.7 0 1 0 958.63,451.10" fill="none" stroke="#666666" stroke-width="3.1" />
<line x1="958.6" y1="451.1" x2="955" y2="446.5" stroke="#666666" stroke-width="2.6" />
<path d="M957.97,439.62 A7.8,7.8 0 1 0 955.00,446.45" fill="none" stroke="#666666" stroke-width="3.1" />
<path d="M952.2,439.2 H970.8 L961.4,449 Z" fill="#ffffff" stroke="#ffffff" stroke-width="4.2" stroke-linejoin="miter"/>
<path d="M952.2,439.2 H970.8 L961.4,449 Z" fill="#ffffff" stroke="#666666" stroke-width="2.5" stroke-linejoin="miter"/>
<text x="13" y="1008.3" font-size="16.4" fill="#484848" textLength="77" lengthAdjust="spacingAndGlyphs" >Slide 1 of 1</text>
<path d="M127.8,994.6 H118.8 V1010.4 H126.3 M127.8,994.6 V1006.2 M127.8,994.6 H137.7 V1002.2" fill="none" stroke="#484848" stroke-width="1.5" />
<path d="M126.4,1006.8 L130.8,1011 L138.9,1002.9" fill="none" stroke="#484848" stroke-width="1.5" />
<text x="165" y="1008.3" font-size="16.4" fill="#484848" textLength="155.5" lengthAdjust="spacingAndGlyphs" >English (United States)</text>
<circle cx="352.2" cy="996" r="2.7" fill="none" stroke="#484848" stroke-width="1.4" />
<path d="M343.4,996 C343.6,999.6 347,1001 348.9,1001.3 C349.4,1004.5 348.8,1007.4 347.6,1009.3 C346.8,1010.9 345.2,1011.2 344.6,1009.8 M360.9,996 C360.6,999.6 357.6,1001 355.6,1001.3 V1004.6" fill="none" stroke="#484848" stroke-width="1.5" stroke-linecap="round"/>
<path d="M353,1008.2 L356.6,1011.7 L363.8,1005.1" fill="none" stroke="#484848" stroke-width="1.5" />
<text x="369" y="1008.3" font-size="16.4" fill="#484848" textLength="168.5" lengthAdjust="spacingAndGlyphs" >Accessibility: Good to go</text>
<path d="M896.1,1001.6 H919.8 M896.1,1007.2 H919.8 M896.1,1012.7 H919.8" fill="none" stroke="#484848" stroke-width="1.5" />
<path d="M903.3,996.4 L908.6,991.8 L913.8,996.4" fill="none" stroke="#484848" stroke-width="1.5" />
<text x="923.5" y="1008.3" font-size="16.4" fill="#484848" textLength="40" lengthAdjust="spacingAndGlyphs" >Notes</text>
<path d="M992.7,993.2 H1012.8 V1006.5 H1001.5 L996.6,1011.4 V1006.5 H992.7 Z" fill="none" stroke="#484848" stroke-width="1.3" />
<text x="1018" y="1008.3" font-size="16.4" fill="#484848" textLength="75.5" lengthAdjust="spacingAndGlyphs" >Comments</text>
<rect x="1121" y="986" width="60" height="32" fill="#c8c8c8" stroke="none" stroke-width="1" rx="0" />
<rect x="1141.8" y="994.6" width="18.4" height="15.3" fill="none" stroke="#484848" stroke-width="1.5" rx="0" />
<path d="M1145.6,994.6 V1009.9 M1145.6,1006.4 H1160.2" fill="none" stroke="#484848" stroke-width="1.4" />
<rect x="1149.6" y="998.4" width="7.2" height="3.4" fill="none" stroke="#484848" stroke-width="1.3" rx="0" />
<rect x="1200.7" y="993.7" width="8.2" height="6.4" fill="none" stroke="#484848" stroke-width="1.4" rx="0" />
<rect x="1200.7" y="1004.3" width="8.2" height="6.4" fill="none" stroke="#484848" stroke-width="1.4" rx="0" />
<rect x="1213.2" y="993.7" width="8.2" height="6.4" fill="none" stroke="#484848" stroke-width="1.4" rx="0" />
<rect x="1213.2" y="1004.3" width="8.2" height="6.4" fill="none" stroke="#484848" stroke-width="1.4" rx="0" />
<path d="M1260.9,992.6 H1267.4 C1269.2,992.6 1270.2,993.6 1270.2,994.8 V1010.4 C1270.2,1009.3 1269.2,1008.7 1267.4,1008.7 H1260.9 Z M1270.2,994.8 C1270.2,993.6 1271.2,992.6 1273,992.6 H1279.5 V1008.7 H1273 C1271.2,1008.7 1270.2,1009.3 1270.2,1010.4" fill="none" stroke="#484848" stroke-width="1.4" />
<path d="M1263.2,996 h4.3 M1263.2,999.2 h4.3 M1263.2,1002.4 h4.3 M1263.2,1005.6 h4.3 M1273,996 h4.3 M1273,999.2 h4.3 M1273,1002.4 h4.3 M1273,1005.6 h4.3" fill="none" stroke="#484848" stroke-width="1.1" />
<path d="M1320.5,992.5 H1340 M1322.3,992.5 V1003.2 H1338.2 V992.5 M1330.2,1003.2 V1010 M1325,1010.4 H1335.5 M1328,997 H1334.3" fill="none" stroke="#484848" stroke-width="1.5" />
<line x1="1369" y1="1001.5" x2="1380.2" y2="1001.5" stroke="#484848" stroke-width="1.0" />
<line x1="1389" y1="1001.8" x2="1537" y2="1001.8" stroke="#484848" stroke-width="1.7" />
<rect x="1433.2" y="993.2" width="7.8" height="16.8" fill="#3b3a39" stroke="none" stroke-width="1" rx="0" />
<line x1="1463" y1="998" x2="1463" y2="1006" stroke="#484848" stroke-width="1.7" />
<path d="M1545,1001.5 H1556.4 M1550.7,995.8 V1007.2" fill="none" stroke="#484848" stroke-width="1.2" />
<text x="1575" y="1008.3" font-size="16.4" fill="#484848" textLength="31" lengthAdjust="spacingAndGlyphs" >66%</text>
<rect x="1631" y="997.2" width="9.4" height="9.4" fill="none" stroke="#484848" stroke-width="1.5" rx="0" />
<path d="M1631.6,994.6 L1635.7,991.2 L1639.8,994.6 M1631.6,1009.2 L1635.7,1012.6 L1639.8,1009.2 M1628.6,997.8 L1625.2,1001.9 L1628.6,1006 M1642.8,997.8 L1646.2,1001.9 L1642.8,1006" fill="none" stroke="#484848" stroke-width="1.4" />
<rect x="79" y="181" width="164" height="86" fill="#000000" stroke="none" stroke-width="1" rx="0" opacity="0.2" filter="url(#mshadow)"/>
<rect x="77" y="176" width="165" height="90" fill="#ffffff" stroke="#d8d6d4" stroke-width="0.6" rx="0" />
<rect x="77.3" y="176" width="165.7" height="44" fill="#d0cecc" stroke="none" stroke-width="1" rx="0" />
<path d="M106.0,205.39999999999998 H96.7 V186.89999999999998 H103.3 L106.3,189.8" fill="#fafafa" stroke="#3b3a39" stroke-width="1.5" />
<path d="M106.2,191.5 H114.1 L118.5,196.0 V208.5 H106.2 Z" fill="#fafafa" stroke="#3b3a39" stroke-width="1.5" />
<path d="M114.0,191.8 V196.2 H118.3" fill="none" stroke="#3b3a39" stroke-width="1.2" />
<path d="M109.0,201.0 H115.6 M109.0,204.2 H115.6" fill="none" stroke="#3b3a39" stroke-width="1.2" />
<text x="133.3" y="206.2" font-size="18.3" fill="#201f1e" textLength="41.3" lengthAdjust="spacingAndGlyphs" >Copy</text>
<rect x="133.3" y="207.9" width="10.6" height="1.2" fill="#201f1e" stroke="none" stroke-width="1" rx="0" />
<path d="M101.8,245.8 H98.5 V234.2 H113.2 V237.6" fill="none" stroke="#3b3a39" stroke-width="1.4" />
<rect x="103" y="238.9" width="14.8" height="11.2" fill="#fafafa" stroke="#3b3a39" stroke-width="1.4" rx="0" />
<text x="134.4" y="250" font-size="18.3" fill="#201f1e" textLength="72.2" lengthAdjust="spacingAndGlyphs" >Duplicate</text>
<rect x="171.2" y="251.6" width="4" height="1.2" fill="#201f1e" stroke="none" stroke-width="1" rx="0" />
<rect x="77.3" y="176" width="165.7" height="44" fill="none" stroke="#000000" stroke-width="4" rx="3" />
<rect x="92.1" y="61.8" width="73.8" height="38.2" fill="none" stroke="#000000" stroke-width="4" rx="5" />
<path d="M244.2,222.2 L258.6,236.4" fill="none" stroke="#2a2a35" stroke-width="2.6" />
<path d="M243.6,222.4 L257.6,236.2" fill="none" stroke="#ffffff" stroke-width="1.1" />
<path d="M250.6,238.5 l2.4,5 M252.2,237.8 l2.4,5" fill="none" stroke="#2a2a35" stroke-width="0.8" />
<line x1="297.4" y1="359" x2="245.6" y2="236.8" stroke="#000000" stroke-width="4.2" />
<path d="M242.4,220.2 L240.3,241.8 L243,241.8 L246.8,237.5 L256.6,236.6 Z" fill="#000000" stroke="none" stroke-width="0" />
<path d="M43.8,510 C47.5,430 52,340 56.3,255 C57.8,225 59.8,204 62.4,186 C64.5,172 67,158 69.6,149 C71.8,141.5 76,129.4 84,128.9 C91,128.4 96,132 106,140" fill="none" stroke="#000000" stroke-width="4.3" stroke-linecap="butt"/>
<path d="M117,149 L102.5,129 L104.7,139.4 L94.6,141 Z" fill="#000000" stroke="none" stroke-width="0" />
<text x="291.6" y="386.6" font-size="31.7" fill="#000000" textLength="82.2" lengthAdjust="spacingAndGlyphs" font-weight="bold" >Copy</text>
<text x="8.8" y="533.8" font-size="29" fill="#000000" textLength="66.4" lengthAdjust="spacingAndGlyphs" font-weight="bold" >Click</text>
<text x="10.9" y="570.8" font-size="29" fill="#000000" textLength="61.6" lengthAdjust="spacingAndGlyphs" font-weight="bold" >here</text>
<rect x="0" y="53" width="2" height="967" fill="#b7472a" stroke="none" stroke-width="1" rx="0" />
<rect x="1670" y="53" width="2" height="967" fill="#b7472a" stroke="none" stroke-width="1" rx="0" />
<rect x="0" y="1018" width="1672" height="2" fill="#b7472a" stroke="none" stroke-width="1" rx="0" />
</svg>
</body></html>
